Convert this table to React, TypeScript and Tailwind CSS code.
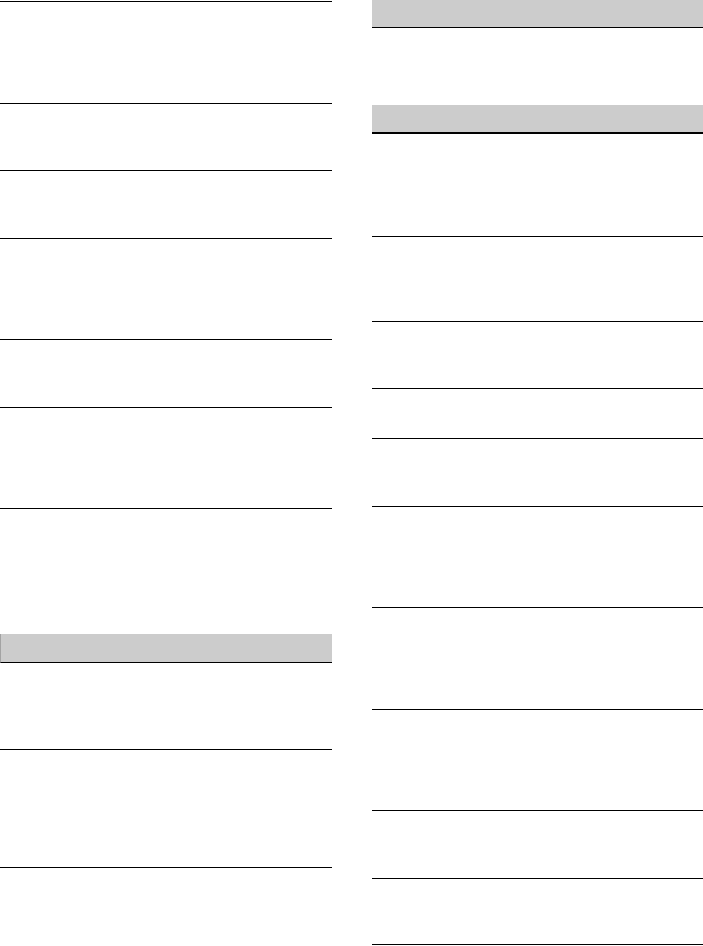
const leftTop = [102, 67, 68, 101, 68, 101]
const leftBottom = [87, 118]
const rightRows = [103, 85, 67, 50, 68, 101, 102, 101, 68, 66]

function Row({ h }: { h: number }) {
  return <div className="border-b border-black" style={{ height: h }} />
}

export default function App() {
  return (
    <div className="flex h-[946px] w-[703px] overflow-hidden bg-white font-['Liberation_Sans',sans-serif]">
      {/* Left column */}
      <div className="flex w-[332px] flex-col">
        <div className="mt-px border-t border-black">
          {leftTop.map((h, i) => (
            <Row key={i} h={h} />
          ))}
        </div>
        <div className="h-[125px]" />
        <div className="h-[29px] border-b border-l border-b-black border-l-[#a3a3a3] bg-[#cccccc]" />
        {leftBottom.map((h, i) => (
          <Row key={i} h={h} />
        ))}
      </div>

      {/* Right column */}
      <div className="ml-[40px] flex flex-1 flex-col">
        <div className="h-[28px] border-b border-black bg-[#cccccc]" />
        <div className="h-[77px]" />
        <div className="h-[29px] border-b-2 border-black bg-[#cccccc]" />
        {rightRows.map((h, i) => (
          <Row key={i} h={h} />
        ))}
      </div>
    </div>
  )
}
